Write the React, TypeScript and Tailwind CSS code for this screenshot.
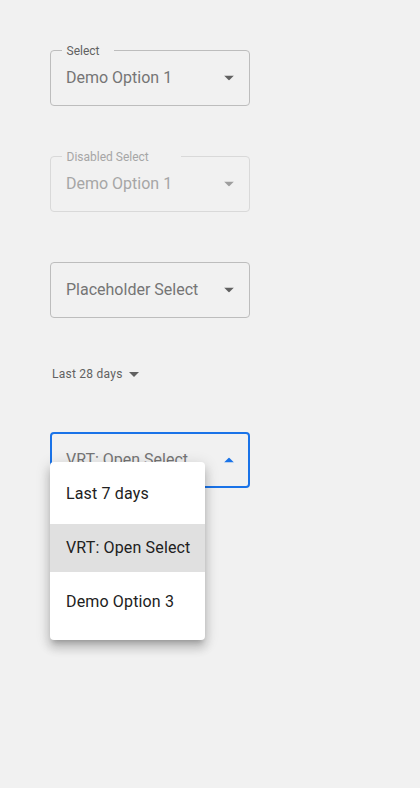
import React from 'react';

function Arrow({ color = '#616161' }: { color?: string }) {
  return (
    <svg width="10" height="5" viewBox="0 0 10 5" className="absolute right-[15px] top-1/2 -translate-y-1/2">
      <path d="M0 0 L5 5 L10 0 Z" fill={color} />
    </svg>
  );
}

function OutlinedSelect({
  label,
  notch = 0,
  value,
  disabled = false,
}: {
  label?: string;
  notch?: number;
  value: string;
  disabled?: boolean;
}) {
  return (
    <div
      className={`relative h-14 w-[200px] rounded border ${disabled ? 'border-[#d9d9d9]' : 'border-[#bdbdbd]'}`}
    >
      {label && (
        <span
          className={`absolute left-[11px] top-[-8px] bg-[#f1f1f1] pl-[4.5px] text-[12px] leading-4 ${disabled ? 'text-[#a6a6a6]' : 'text-[#616161]'}`}
          style={{ width: notch }}
        >
          {label}
        </span>
      )}
      <div
        className={`flex h-full items-center pl-[15px] text-[16px] ${disabled ? 'text-[#a6a6a6]' : 'text-[#757575]'}`}
      >
        {value}
      </div>
      <Arrow color={disabled ? '#9e9e9e' : '#616161'} />
    </div>
  );
}

export default function App() {
  const options = ['Last 7 days', 'VRT: Open Select', 'Demo Option 3'];
  return (
    <div
      className="min-h-[788px] bg-[#f1f1f1] pl-[50px] pt-[50px]"
      style={{ fontFamily: 'Roboto, "Liberation Sans", sans-serif' }}
    >
      <OutlinedSelect label="Select" notch={52} value="Demo Option 1" />
      <div className="mt-[50px]">
        <OutlinedSelect label="Disabled Select" notch={119} value="Demo Option 1" disabled />
      </div>
      <div className="mt-[50px]">
        <OutlinedSelect value="Placeholder Select" />
      </div>

      <div className="mt-[46px] flex h-5 items-center pl-[2px] text-[12px] tracking-[0.25px] text-[#616161]">
        <span>Last 28 days</span>
        <svg width="10" height="5" viewBox="0 0 10 5" className="ml-[6px]">
          <path d="M0 0 L5 5 L10 0 Z" fill="#616161" />
        </svg>
      </div>

      <div className="relative mt-[48px] w-[200px]">
        <div className="relative h-14 w-[200px] rounded border-2 border-[#1a73e8]">
          <div className="flex h-full items-center pl-[14px] text-[16px] text-[#757575]">VRT: Open Select</div>
          <svg width="10" height="5" viewBox="0 0 10 5" className="absolute right-[14px] top-1/2 -translate-y-1/2">
            <path d="M0 5 L5 0 L10 5 Z" fill="#1a73e8" />
          </svg>
        </div>

        <div className="absolute left-0 top-[30px] z-10 w-[155px] rounded bg-white pb-[14px] pt-2 shadow-[0_5px_5px_-3px_rgba(0,0,0,0.2),0_8px_10px_1px_rgba(0,0,0,0.14),0_3px_14px_2px_rgba(0,0,0,0.12)]">
          {options.map((o, i) => (
            <div
              key={o}
              className={`flex h-12 items-center pl-4 text-[16px] tracking-[0.15px] text-[#212121] ${i > 0 ? 'mt-[6px]' : ''} ${i === 1 ? 'bg-[#e0e0e0]' : ''}`}
            >
              {o}
            </div>
          ))}
        </div>
      </div>
    </div>
  );
}
